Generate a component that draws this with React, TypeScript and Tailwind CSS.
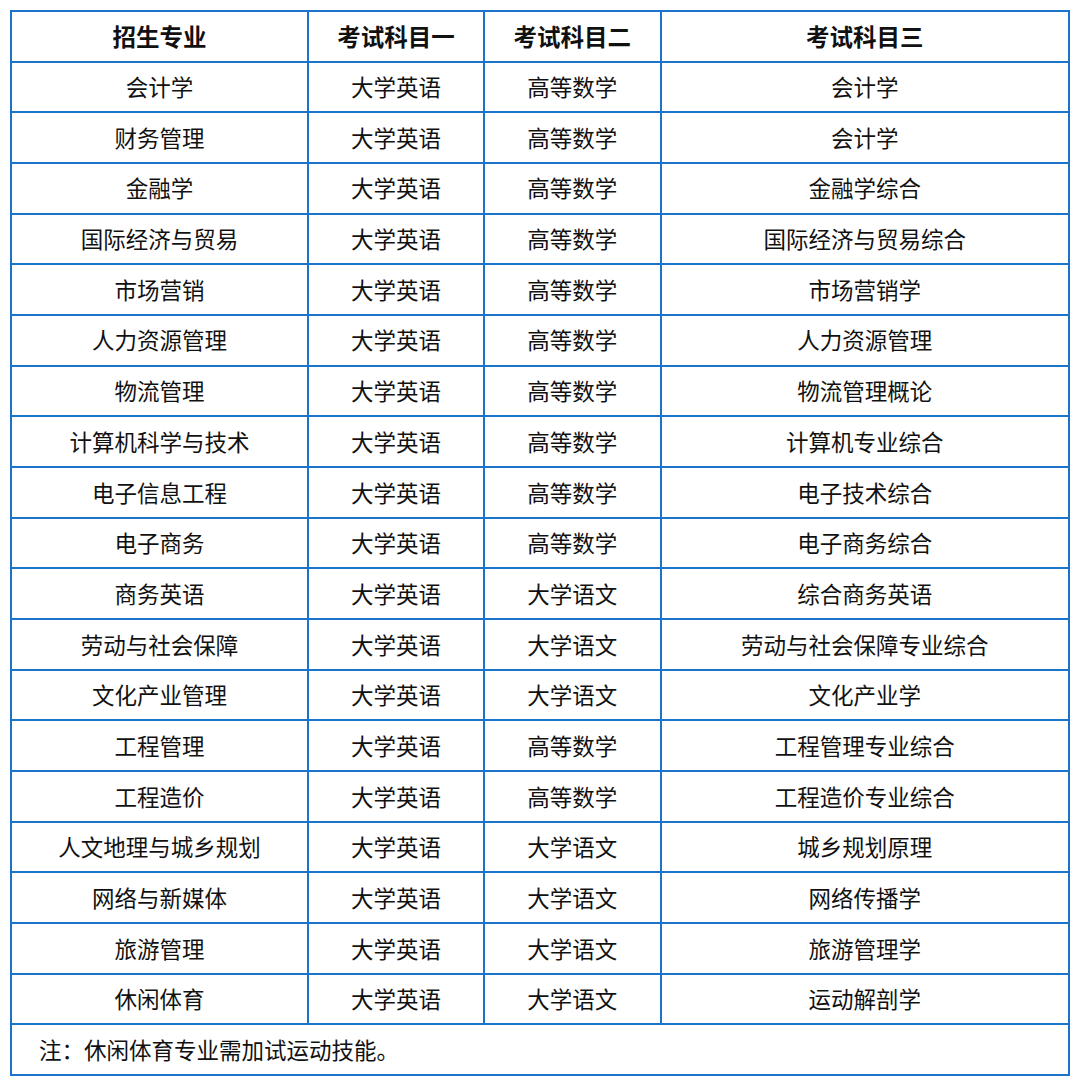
import React from "react";

const rows: [string, string, string, string][] = [
  ["会计学", "大学英语", "高等数学", "会计学"],
  ["财务管理", "大学英语", "高等数学", "会计学"],
  ["金融学", "大学英语", "高等数学", "金融学综合"],
  ["国际经济与贸易", "大学英语", "高等数学", "国际经济与贸易综合"],
  ["市场营销", "大学英语", "高等数学", "市场营销学"],
  ["人力资源管理", "大学英语", "高等数学", "人力资源管理"],
  ["物流管理", "大学英语", "高等数学", "物流管理概论"],
  ["计算机科学与技术", "大学英语", "高等数学", "计算机专业综合"],
  ["电子信息工程", "大学英语", "高等数学", "电子技术综合"],
  ["电子商务", "大学英语", "高等数学", "电子商务综合"],
  ["商务英语", "大学英语", "大学语文", "综合商务英语"],
  ["劳动与社会保障", "大学英语", "大学语文", "劳动与社会保障专业综合"],
  ["文化产业管理", "大学英语", "大学语文", "文化产业学"],
  ["工程管理", "大学英语", "高等数学", "工程管理专业综合"],
  ["工程造价", "大学英语", "高等数学", "工程造价专业综合"],
  ["人文地理与城乡规划", "大学英语", "大学语文", "城乡规划原理"],
  ["网络与新媒体", "大学英语", "大学语文", "网络传播学"],
  ["旅游管理", "大学英语", "大学语文", "旅游管理学"],
  ["休闲体育", "大学英语", "大学语文", "运动解剖学"],
];

const headers = ["招生专业", "考试科目一", "考试科目二", "考试科目三"];

export default function App() {
  return (
    <div
      className="w-[1080px] h-[1087px] bg-white pl-[10px] pt-[10px]"
      style={{ fontFamily: '"Noto Sans CJK SC", "Noto Sans", sans-serif' }}
    >
      <div className="w-[1060px] grid grid-cols-[297px_176px_176.5px_408.5px] auto-rows-[50.68px] border-l-2 border-t-2 border-[#1b74c9] text-[22.5px] text-[#111]">
        {headers.map((h) => (
          <div
            key={h}
            className="flex items-center justify-center border-r-2 border-b-2 border-[#1b74c9] font-bold text-[23.5px]"
          >
            {h}
          </div>
        ))}
        {rows.map((r, i) =>
          r.map((c, j) => (
            <div
              key={`${i}-${j}`}
              className="flex items-center justify-center border-r-2 border-b-2 border-[#1b74c9]"
            >
              {c}
            </div>
          ))
        )}
        <div className="col-span-4 flex items-center pl-[27px] border-r-2 border-b-2 border-[#1b74c9]">
          注：休闲体育专业需加试运动技能。
        </div>
      </div>
    </div>
  );
}
